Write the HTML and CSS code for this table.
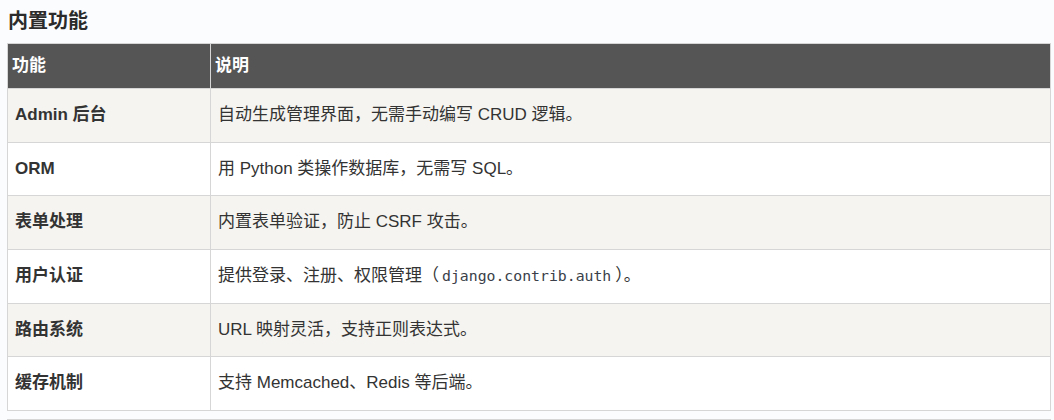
FILE: index.html
```html
<!DOCTYPE html>
<html lang="zh-CN">
<head>
<meta charset="utf-8">
<title>内置功能</title>
<link rel="stylesheet" href="styles.css">
</head>
<body>
<div class="page">
  <h3 class="title">内置功能</h3>
  <table class="features">
    <thead>
      <tr><th class="col-name">功能</th><th>说明</th></tr>
    </thead>
    <tbody>
      <tr><td class="name">Admin 后台</td><td>自动生成管理界面，无需手动编写 CRUD 逻辑。</td></tr>
      <tr><td class="name">ORM</td><td>用 Python 类操作数据库，无需写 SQL。</td></tr>
      <tr><td class="name">表单处理</td><td>内置表单验证，防止 CSRF 攻击。</td></tr>
      <tr><td class="name">用户认证</td><td>提供登录、注册、权限管理（<code class="code">django.contrib.auth</code>）。</td></tr>
      <tr><td class="name">路由系统</td><td>URL 映射灵活，支持正则表达式。</td></tr>
      <tr><td class="name">缓存机制</td><td>支持 Memcached、Redis 等后端。</td></tr>
    </tbody>
  </table>
  <div class="next"></div>
</div>
</body>
</html>
```

FILE: styles.css
```css
html, body {
  margin: 0;
  padding: 0;
  background: #fbfcfd;
}

.page {
  padding: 0 7px;
  font-family: "Liberation Sans", "Noto Sans CJK SC", sans-serif;
  color: #333333;
}

.title {
  margin: 0;
  padding: 7px 0 0 1px;
  height: 36px;
  font-size: 20px;
  line-height: 28px;
  font-weight: bold;
  color: #2b2b2b;
}

.features {
  width: 1044px;
  border-collapse: collapse;
  font-size: 17px;
}

.features th,
.features td {
  border: 1px solid #d6d6d6;
  text-align: left;
  vertical-align: middle;
}

.features th {
  background: #555555;
  color: #ffffff;
  font-weight: bold;
  height: 44px;
  padding: 0 4px;
  line-height: 24px;
}

.features .col-name {
  width: 194px;
}

.features td {
  height: 26px;
  padding: 13px 7px;
  line-height: 26.67px;
}

.features tbody tr:nth-child(odd) td {
  background: #f5f4f0;
}

.features tbody tr:nth-child(even) td {
  background: #ffffff;
}

.features td.name {
  font-weight: bold;
}

.code {
  font-family: "DejaVu Sans Mono", monospace;
  font-size: 14.8px;
  color: #3a3f4a;
  padding: 0 4px 0 3px;
}

.next {
  margin-top: 8px;
  border-top: 1px solid #d6d6d6;
  width: 1044px;
  height: 10px;
}
```
